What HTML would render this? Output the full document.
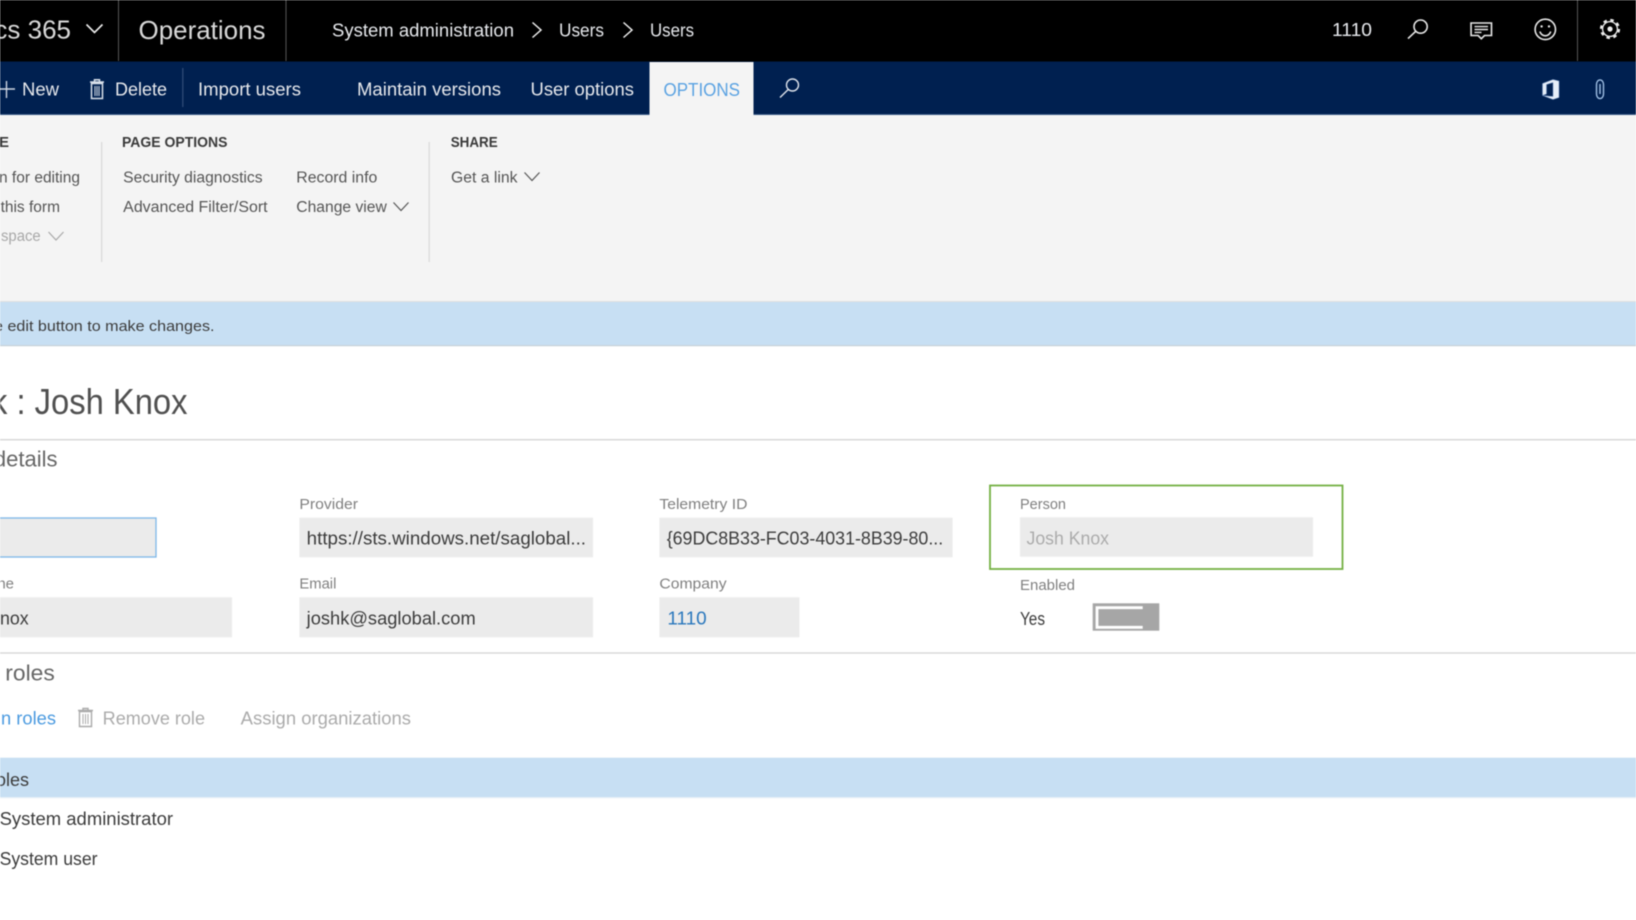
<!DOCTYPE html>
<html lang="en"><head><meta charset="utf-8"><title>Users - Operations</title>
<style>
html,body{margin:0;padding:0;background:#fff;width:1636px;height:920px;overflow:hidden}
svg{display:block;filter:blur(.4px)}
text{font-family:"Liberation Sans",sans-serif}
.w{fill:#e6e8ec;font-size:18px}
.r{fill:#555;font-size:15.5px}
.h{fill:#3a3a3a;font-size:15px;font-weight:bold}
.l{fill:#808080;font-size:15px}
.v{fill:#3c3c3c;font-size:18px}
.s{fill:#666;font-size:22px}
.d{fill:#ababab;font-size:18px}
</style></head><body>
<svg width="1636" height="920" viewBox="0 0 1636 920" xmlns="http://www.w3.org/2000/svg">
<rect width="1636" height="920" fill="#fff"/>
<!-- top bar -->
<rect width="1636" height="61.5" fill="#000"/>
<rect y="61.5" width="1636" height="53" fill="#002050"/>
<rect y="114" width="1636" height="1" fill="#3a5a86"/>
<rect x="118" width="1" height="61" fill="#555"/>
<rect x="285.5" width="1" height="61" fill="#555"/>
<rect x="1577" width="1" height="61" fill="#555"/>
<text x="71" y="38.7" text-anchor="end" fill="#d8d8d8" font-size="26">Dynamics 365</text>
<path d="M86.5 24.5L94.5 32.5L102.5 24.5" fill="none" stroke="#eee" stroke-width="1.6"/>
<text x="138.5" y="38.8" fill="#d8d8d8" font-size="26" textLength="127" lengthAdjust="spacingAndGlyphs">Operations</text>
<text class="w" x="332" y="36.5" textLength="182" lengthAdjust="spacingAndGlyphs">System administration</text>
<path d="M532.5 22.5L541 30L532.5 37.5" fill="none" stroke="#eee" stroke-width="1.5"/>
<text class="w" x="559" y="36.5" textLength="45" lengthAdjust="spacingAndGlyphs">Users</text>
<path d="M623.5 22.5L632 30L623.5 37.5" fill="none" stroke="#eee" stroke-width="1.5"/>
<text class="w" x="650" y="36.5" textLength="44" lengthAdjust="spacingAndGlyphs">Users</text>
<text class="w" x="1332" y="36" textLength="40" lengthAdjust="spacingAndGlyphs">1110</text>
<!-- top icons -->
<g fill="none" stroke="#e8e8e8" stroke-width="1.6">
<circle cx="1420.6" cy="26.6" r="6.6"/><path d="M1415.6 31.4L1408 38.6"/>
<path d="M1471 23h20.5v12.5h-7l-3.2 3.2l-3.2-3.2h-7z"/>
<path d="M1474.5 26.6h13.5M1474.5 29.5h13.5M1474.5 32.4h7" stroke-width="1.4"/>
<circle cx="1545.3" cy="29.4" r="10.2"/>
<path d="M1539.8 31.6c1.4 3.2 3.4 4.2 5.5 4.2s4.1-1 5.5-4.2"/>
</g>
<circle cx="1541.6" cy="26.4" r="1.2" fill="#eee"/><circle cx="1549" cy="26.4" r="1.2" fill="#eee"/>
<g fill="none" stroke="#eee">
<circle cx="1610" cy="29" r="9" stroke-width="2.2" stroke-dasharray="3.5 3.57"/>
<circle cx="1610" cy="29" r="7.4" stroke-width="1.3"/>
</g>
<circle cx="1610" cy="29" r="2.6" fill="#eee"/>
<!-- action bar -->
<path d="M0 89H15M6.5 81V98" stroke="#cfd6e2" stroke-width="1.4" fill="none"/>
<text class="w" x="22" y="95.7" textLength="37" lengthAdjust="spacingAndGlyphs">New</text>
<g fill="none" stroke="#d9e0ea" stroke-width="1.5">
<path d="M91.5 83.5h11v15h-11zM90 82h14M94.5 82v-2.2h5V82"/>
<path d="M95 86v10M97 86v10M99 86v10" stroke-width="1"/>
</g>
<text class="w" x="115" y="95.7" textLength="52" lengthAdjust="spacingAndGlyphs">Delete</text>
<rect x="182.3" y="68" width="1" height="39" fill="#3b5680"/>
<text class="w" x="198" y="95.7" textLength="103" lengthAdjust="spacingAndGlyphs">Import users</text>
<text class="w" x="357" y="95.7" textLength="144" lengthAdjust="spacingAndGlyphs">Maintain versions</text>
<text class="w" x="530.5" y="95.7" textLength="103.5" lengthAdjust="spacingAndGlyphs">User options</text>
<g fill="none" stroke="#dfe4ec" stroke-width="1.4"><circle cx="792.5" cy="85" r="6"/><path d="M788.2 89.5L780 97.5"/></g>
<!-- office / clip -->
<path d="M1542.5 83.5L1553 79.5L1559 81V97.5L1553 99.5L1542.5 95.5L1553 96.5V82.5L1546.5 84.5V94L1542.5 95.5Z" fill="#e6eef8" stroke="#6f8fc0" stroke-width=".5"/>
<path d="M1596.5 84.5a3.5 4.6 0 0 1 7 0V94a3.5 4.6 0 0 1-7 0zM1600 84V94" fill="none" stroke="#9fbfe4" stroke-width="1.4"/>
<!-- ribbon -->
<rect y="115" width="1636" height="187" fill="#f4f4f4"/>
<rect x="649.5" y="62" width="104" height="53.5" fill="#f4f4f4"/>
<text x="663.5" y="96" fill="#5aa2e2" font-size="18" textLength="76.5" lengthAdjust="spacingAndGlyphs">OPTIONS</text>
<text class="h" x="9" y="147" text-anchor="end">E</text>
<text class="h" x="122" y="147" textLength="105.5" lengthAdjust="spacingAndGlyphs">PAGE OPTIONS</text>
<text class="h" x="450.7" y="147" textLength="47" lengthAdjust="spacingAndGlyphs">SHARE</text>
<rect x="101" y="142" width="1.4" height="120" fill="#dcdcdc"/>
<rect x="428.5" y="142" width="1.4" height="120" fill="#dcdcdc"/>
<text class="r" x="80" y="182.7" text-anchor="end">n for editing</text>
<text class="r" x="60" y="212" text-anchor="end">this form</text>
<text class="r" x="1" y="241" style="fill:#a8a8a8" textLength="39.7" lengthAdjust="spacingAndGlyphs">space</text>
<path d="M48.5 232L56 240L63.5 232" fill="none" stroke="#a8a8a8" stroke-width="1.2"/>
<text class="r" x="123.2" y="182.7" textLength="139.4" lengthAdjust="spacingAndGlyphs">Security diagnostics</text>
<text class="r" x="296.3" y="182.7" textLength="81" lengthAdjust="spacingAndGlyphs">Record info</text>
<text class="r" x="123.2" y="212" textLength="144.4" lengthAdjust="spacingAndGlyphs">Advanced Filter/Sort</text>
<text class="r" x="296.3" y="212" textLength="90.5" lengthAdjust="spacingAndGlyphs">Change view</text>
<path d="M393.5 202.5L401 210.5L408.5 202.5" fill="none" stroke="#555" stroke-width="1.2"/>
<text class="r" x="451" y="182.7" textLength="66.5" lengthAdjust="spacingAndGlyphs">Get a link</text>
<path d="M524.5 172.5L532 180.5L539.5 172.5" fill="none" stroke="#555" stroke-width="1.2"/>
<!-- message bar -->
<rect y="301" width="1636" height="1.5" fill="#e0e0e0"/>
<rect y="302" width="1636" height="43" fill="#c7dff3"/>
<rect y="345" width="1636" height="1.2" fill="#c6d0d8"/>
<text x="214.5" y="331" text-anchor="end" fill="#3c3c3c" font-size="15" textLength="220.5" lengthAdjust="spacingAndGlyphs">e edit button to make changes.</text>
<!-- title -->
<text x="-9" y="414" fill="#505050" font-size="36" textLength="196.5" lengthAdjust="spacingAndGlyphs">k : Josh Knox</text>
<rect y="439" width="1636" height="1.4" fill="#d6d6d6"/>
<text class="s" x="57.5" y="466.7" text-anchor="end">details</text>
<!-- form row 1 -->
<text class="l" x="299.4" y="509" textLength="58.6" lengthAdjust="spacingAndGlyphs">Provider</text>
<text class="l" x="659.4" y="509" textLength="88" lengthAdjust="spacingAndGlyphs">Telemetry ID</text>
<rect x="-2" y="518" width="158" height="39" fill="#ebebeb" stroke="#7db7e8" stroke-width="1.3"/>
<rect x="299.4" y="517.7" width="293.6" height="39.6" fill="#ebebeb"/>
<text class="v" x="306.7" y="544.3" textLength="279.3" lengthAdjust="spacingAndGlyphs">https://sts.windows.net/saglobal...</text>
<rect x="659.4" y="517.7" width="293.2" height="39.6" fill="#ebebeb"/>
<text class="v" x="666.7" y="544.3" textLength="276.5" lengthAdjust="spacingAndGlyphs">{69DC8B33-FC03-4031-8B39-80...</text>
<!-- person -->
<rect x="990" y="485.5" width="352.5" height="83.5" fill="#fff" stroke="#74b043" stroke-width="1.8"/>
<text class="l" x="1020" y="509" textLength="46" lengthAdjust="spacingAndGlyphs">Person</text>
<rect x="1020" y="517.3" width="293" height="39.4" fill="#ebebeb"/>
<text class="d" x="1026.5" y="544.3" textLength="82.5" lengthAdjust="spacingAndGlyphs">Josh Knox</text>
<!-- form row 2 -->
<text class="l" x="14" y="588.7" text-anchor="end">ne</text>
<text class="l" x="299.4" y="588.7" textLength="37" lengthAdjust="spacingAndGlyphs">Email</text>
<text class="l" x="659.4" y="588.7" textLength="67.2" lengthAdjust="spacingAndGlyphs">Company</text>
<text class="l" x="1020" y="590" textLength="55" lengthAdjust="spacingAndGlyphs">Enabled</text>
<rect x="0" y="597.3" width="232" height="40" fill="#ebebeb"/>
<text class="v" x="0" y="624.3" textLength="28.7" lengthAdjust="spacingAndGlyphs">nox</text>
<rect x="299.4" y="597.3" width="293.6" height="40" fill="#ebebeb"/>
<text class="v" x="306.7" y="624.3" textLength="169" lengthAdjust="spacingAndGlyphs">joshk@saglobal.com</text>
<rect x="659.4" y="597.3" width="140" height="40" fill="#ebebeb"/>
<text x="667.4" y="624.3" fill="#2b78bd" font-size="18" textLength="39.3" lengthAdjust="spacingAndGlyphs">1110</text>
<text class="v" x="1020" y="624.8" textLength="25" lengthAdjust="spacingAndGlyphs">Yes</text>
<rect x="1092.7" y="603.3" width="66.6" height="27.4" fill="#a6a6a6"/>
<path d="M1142.7 607.7H1097V627.3H1142.7" fill="none" stroke="#fff" stroke-width="2.8"/>
<rect y="652.3" width="1636" height="1.4" fill="#d6d6d6"/>
<!-- roles -->
<text class="s" x="54.8" y="680.4" text-anchor="end" textLength="49.5" lengthAdjust="spacingAndGlyphs">roles</text>
<text x="56" y="724.7" text-anchor="end" fill="#4a9ae0" font-size="18" textLength="55" lengthAdjust="spacingAndGlyphs">n roles</text>
<g fill="none" stroke="#aaa" stroke-width="1.4">
<path d="M79.5 711.5h12v15h-12zM78 710.5h15M83 710.5v-2h5v2"/>
<path d="M83 714v10M85.5 714v10M88 714v10" stroke-width="1"/>
</g>
<text class="d" x="102.7" y="724.7" textLength="102.3" lengthAdjust="spacingAndGlyphs">Remove role</text>
<text class="d" x="240.7" y="724.7" textLength="170.3" lengthAdjust="spacingAndGlyphs">Assign organizations</text>
<rect y="757.7" width="1636" height="39.6" fill="#c7dff3"/>
<rect y="797.3" width="1636" height="1.2" fill="#eef3f8"/>
<text x="29" y="786" text-anchor="end" fill="#3c3c3c" font-size="18">oles</text>
<text class="v" x="-0.4" y="825" textLength="173.4" lengthAdjust="spacingAndGlyphs">System administrator</text>
<text class="v" x="-0.4" y="865" textLength="97.9" lengthAdjust="spacingAndGlyphs">System user</text>
</svg>
</body></html>
